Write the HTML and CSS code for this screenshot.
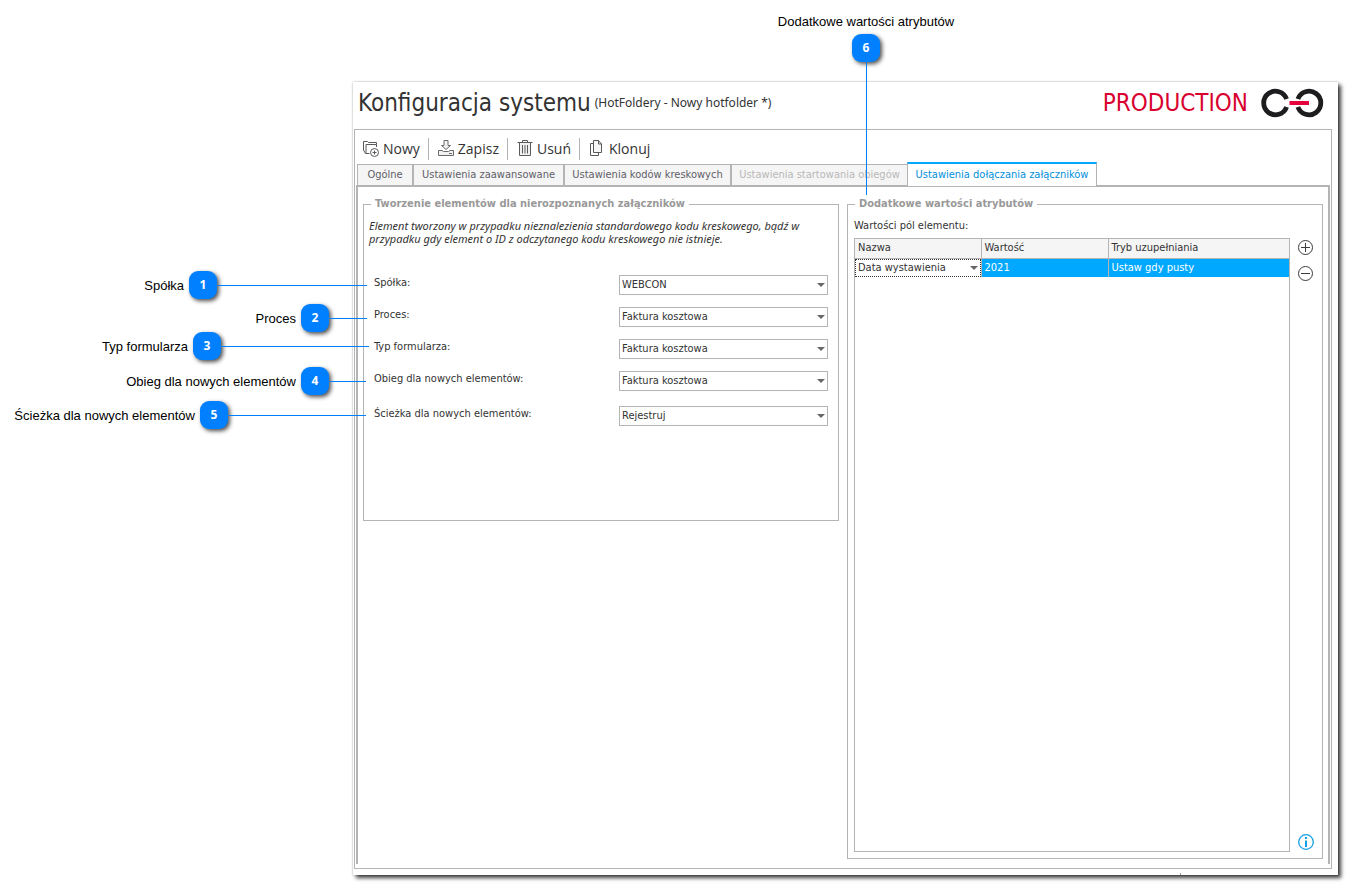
FILE: index.html
```html
<!DOCTYPE html>
<html lang="pl">
<head>
<meta charset="utf-8">
<title>Konfiguracja systemu</title>
<link rel="stylesheet" href="styles.css">
</head>
<body>
<main class="window">
  <header class="header">
    <h1 class="title">Konfiguracja systemu</h1>
    <span class="subtitle">(HotFoldery - Nowy hotfolder *)</span>
    <span class="env">PRODUCTION</span>
    <svg class="logo" width="64" height="30" viewBox="0 0 64 30" fill="none" aria-label="Logo">
      <path d="M25.600 11A11.800 11.800 0 1 0 25.600 19" stroke="#1d1d1f" stroke-width="4.800"/>
      <path d="M36.900 11A11.800 11.800 0 1 1 36.900 19" stroke="#1d1d1f" stroke-width="4.800"/>
      <path d="M28.500 15H48" stroke="#e4003a" stroke-width="4"/>
    </svg>
  </header>

  <div class="frame">
    <div class="toolbar">
      <button class="tool" type="button">
        <svg width="18" height="18" viewBox="0 0 18 18" fill="none" stroke="#5a5a5a">
          <path d="M7.500 13.500H3.500L1.500 10V1.500H5.500L6.500 2.500H14.500V4.500"/><path d="M4 13.500V4.500H14.500V7"/>
          <circle cx="12.500" cy="12.500" r="4"/><path d="M12.500 10.500V14.500M10.500 12.500H14.500"/>
        </svg>Nowy</button>
      <button class="tool" type="button">
        <svg width="18" height="18" viewBox="0 0 18 18" fill="none" stroke="#6a6a6a">
          <path d="M7 0.500H11V5.500H13.500L9 9.500L4.500 5.500H7Z" fill="#f2f2f2"/><path d="M1.500 10.500H5L6.500 11.500H11.500L13 10.500H16.500V15.500H1.500Z" fill="#f2f2f2"/><path d="M12 13.500H15"/>
        </svg>Zapisz</button>
      <button class="tool" type="button">
        <svg width="18" height="18" viewBox="0 0 18 18" fill="none" stroke="#5a5a5a">
          <path d="M6.500 2V0.500H11.500V2M1.500 2.500H16.500"/><path d="M3.500 3V15.500H14.500V3" fill="#f2f2f2"/><path d="M6.500 5V13.500M9 5V13.500M11.500 5V13.500"/>
        </svg>Usuń</button>
      <button class="tool" type="button">
        <svg width="18" height="18" viewBox="0 0 18 18" fill="none" stroke="#5a5a5a">
          <path d="M5.500 0.500H10.500L13.500 4V12.500H5.500Z" fill="#f7f7f7"/><path d="M10.500 0.500V4H13.500M5 3.500H2.500V15.500H10.500V13"/>
        </svg>Klonuj</button>
    </div>

    <nav class="tabs">
      <button class="tab tab-general" type="button">Ogólne</button>
      <button class="tab tab-advanced" type="button">Ustawienia zaawansowane</button>
      <button class="tab tab-barcodes" type="button">Ustawienia kodów kreskowych</button>
      <button class="tab tab-start" type="button" disabled>Ustawienia startowania obiegów</button>
      <button class="tab tab-active" type="button">Ustawienia dołączania załączników</button>
    </nav>

    <section class="page">
      <fieldset class="group group-create">
        <legend>Tworzenie elementów dla nierozpoznanych załączników</legend>
        <p class="hint">Element tworzony w przypadku nieznalezienia standardowego kodu kreskowego, bądź w przypadku gdy element o ID z odczytanego kodu kreskowego nie istnieje.</p>
        <div class="fields">
          <div class="field"><label for="company">Spółka:</label>
            <span class="select"><select id="company"><option>WEBCON</option></select></span></div>
          <div class="field"><label for="process">Proces:</label>
            <span class="select"><select id="process"><option>Faktura kosztowa</option></select></span></div>
          <div class="field"><label for="form">Typ formularza:</label>
            <span class="select"><select id="form"><option>Faktura kosztowa</option></select></span></div>
          <div class="field"><label for="workflow">Obieg dla nowych elementów:</label>
            <span class="select"><select id="workflow"><option>Faktura kosztowa</option></select></span></div>
          <div class="field"><label for="path">Ścieżka dla nowych elementów:</label>
            <span class="select"><select id="path"><option>Rejestruj</option></select></span></div>
        </div>
      </fieldset>

      <fieldset class="group group-values">
        <legend>Dodatkowe wartości atrybutów</legend>
        <p class="caption" id="values-caption">Wartości pól elementu:</p>
        <div class="values">
          <div class="grid">
            <table class="table" aria-labelledby="values-caption">
              <colgroup><col class="col-name"><col class="col-value"><col></colgroup>
              <thead><tr><th>Nazwa</th><th>Wartość</th><th>Tryb uzupełniania</th></tr></thead>
              <tbody><tr>
                <td class="cell-edit"><span class="select"><select aria-label="Nazwa"><option>Data wystawienia</option></select></span></td>
                <td>2021</td><td>Ustaw gdy pusty</td>
              </tr></tbody>
            </table>
          </div>
          <div class="side">
            <button class="round" type="button" aria-label="Dodaj"><svg width="16" height="16" viewBox="0 0 16 16" fill="none" stroke="#3c3c3c"><circle cx="7.500" cy="7.500" r="7"/><path d="M3 7.500H12M7.500 3V12"/></svg></button>
            <button class="round" type="button" aria-label="Usuń wiersz"><svg width="16" height="16" viewBox="0 0 16 16" fill="none" stroke="#3c3c3c"><circle cx="7.500" cy="7.500" r="7"/><path d="M3 7.500H12"/></svg></button>
            <button class="round info" type="button" aria-label="Informacje"><svg width="16" height="16" viewBox="0 0 16 16" fill="none" stroke="#14a0e6"><circle cx="8" cy="8" r="7.300" stroke-width="1.300"/><path d="M8 3V5M8 6.500V13" stroke-width="2"/></svg></button>
          </div>
        </div>
      </fieldset>
    </section>
  </div>
</main>

<div class="callout c1"><span>Spółka</span><b class="badge">1</b><i class="line"></i></div>
<div class="callout c2"><span>Proces</span><b class="badge">2</b><i class="line"></i></div>
<div class="callout c3"><span>Typ formularza</span><b class="badge">3</b><i class="line"></i></div>
<div class="callout c4"><span>Obieg dla nowych elementów</span><b class="badge">4</b><i class="line"></i></div>
<div class="callout c5"><span>Ścieżka dla nowych elementów</span><b class="badge">5</b><i class="line"></i></div>
<div class="callout c6"><span>Dodatkowe wartości atrybutów</span><b class="badge">6</b><i class="line"></i></div>
</body>
</html>
```
FILE: styles.css
```css
* { box-sizing: border-box; }

body {
  margin: 0;
  min-height: 100vh;
  display: flex;
  flex-direction: column;
  position: relative;
  background: #fff;
  color: #333;
  font: 11px/14px Tahoma, "DejaVu Sans Condensed", "DejaVu Sans", sans-serif;
}

button, select { font: inherit; color: inherit; }
button { margin: 0; padding: 0; border: 0; background: none; }

.window {
  flex: 1;
  display: flex;
  flex-direction: column;
  position: relative;
  margin: 82px 10px 10px 353px;
  padding: 0 6px 6px 1px;
  background: #fff;
  box-shadow: 0 0 2px rgba(0, 0, 0, 0.3), 3px 3px 4px rgba(0, 0, 0, 0.75);
}
.window::after {
  content: "";
  position: absolute;
  right: 157px;
  bottom: 0;
  width: 1px;
  height: 2px;
  background: #999;
}

.header { display: flex; align-items: center; height: 47px; padding: 0 7px 6px 4px; }
.title { margin: 0; font-size: 24px; line-height: 30px; font-weight: 400; }
.subtitle { margin-left: 4px; font: 12px/14px Tahoma, "Noto Sans", sans-serif; }
.env { margin-left: auto; font-size: 24px; line-height: 30px; color: #d9002f; }
.logo { margin-left: 13px; }

.frame { flex: 1; display: flex; flex-direction: column; padding: 0 1px 4px; border: 1px solid #b4b4b4; }

.toolbar { display: flex; align-items: center; height: 32px; padding: 6px 0 0 6px; }
.tool {
  display: flex;
  align-items: center;
  gap: 3px;
  height: 22px;
  font: 14px/20px "Segoe UI", "Open Sans", sans-serif;
}
.tool + .tool { margin-left: 8px; padding-left: 8px; border-left: 1px solid #b4b4b4; }

.tabs { display: flex; align-items: flex-end; height: 23px; padding-left: 1px; }
.tab {
  height: 21px;
  border: 1px solid #b4b4b4;
  border-bottom: 0;
  background: #f5f5f5;
  color: #5f5f68;
  white-space: nowrap;
}
.tab:disabled { border-right: 0; color: #b8b8b8; }
.tab-general { width: 56px; }
.tab-advanced { width: 151px; }
.tab-barcodes { width: 167px; }
.tab-start { width: 176px; }
.tab-active {
  width: 190px;
  height: 24px;
  margin-bottom: -1px;
  border-top: 2px solid #00a8ff;
  background: #fff;
  color: #0090dc;
  z-index: 1;
}

.page {
  flex: 1;
  display: grid;
  grid-template-columns: 1fr 1fr;
  gap: 8px;
  padding: 9px 5px 5px;
  border: 2px solid #b4b4b4;
  border-bottom: 0;
}

.group { display: flex; flex-direction: column; min-width: 0; margin: 0; padding: 0; border: 1px solid #b4b4b4; }
.group legend {
  margin-left: 7px;
  padding: 0 4px;
  line-height: 16px;
  font-weight: 700;
  color: #999;
}
.group-create { align-self: start; height: 325px; }

.hint { margin: 0; padding: 7px 5px 0; font: italic 11px/13px Tahoma, "Noto Sans", sans-serif; }
.fields { display: grid; gap: 12px; padding: 30px 10px 0; }
.field { display: grid; grid-template-columns: 1fr 209px; height: 20px; }
.field label { padding-top: 1px; }
.field:last-child { margin-top: 3px; }

.select { position: relative; display: block; }
.select select {
  display: block;
  width: 100%;
  height: 20px;
  padding: 0 2px;
  border: 1px solid #b4b4b4;
  border-radius: 0;
  background: #fff;
  appearance: none;
}
.select::after {
  content: "";
  position: absolute;
  top: 8px;
  right: 3px;
  border: 4px solid transparent;
  border-top-color: #666;
  border-bottom: 0;
  pointer-events: none;
}

.caption { margin: 0; padding: 7px 6px 5px; }
.values { flex: 1; display: flex; padding: 0 8px 6px 6px; }
.grid { flex: 1; border: 1px solid #b4b4b4; }
.table { width: 100%; table-layout: fixed; border-collapse: collapse; }
.col-name { width: 126px; }
.col-value { width: 127px; }
.table th, .table td { padding: 0 3px; text-align: left; font-weight: 400; }
.table th { height: 19px; background: #f5f5f5; border-bottom: 1px solid #b4b4b4; }
.table th + th, .table td + td { border-left: 1px solid #b4b4b4; }
.table td { height: 18px; background: #00a8ff; color: #fff; }
.table .cell-edit { padding: 0; background: #fff; color: #333; }
.select select[aria-label] { height: 18px; border: 1px dotted #333; }
.cell-edit .select::after { top: 7px; }

.side { display: flex; flex-direction: column; gap: 10px; margin-left: 8px; padding-top: 2px; }
.round { width: 16px; height: 16px; }
.round svg { display: block; }
.info { margin-top: auto; margin-bottom: 2px; }

/* Numbered callouts laid over the window */
.callout {
  position: absolute;
  left: 0;
  display: flex;
  align-items: center;
  color: #000;
  font: 13px/16px Arial, "Liberation Sans", sans-serif;
}
.callout span { flex: 1; padding-top: 2px; text-align: right; white-space: nowrap; }
.badge {
  width: 28px;
  height: 28px;
  margin-left: 5px;
  border-radius: 9px;
  background: #0080ff;
  box-shadow: 2px 2px 4px rgba(0, 0, 0, 0.7);
  color: #fff;
  font: 700 12px/28px "Segoe UI", "Open Sans", sans-serif;
  text-align: center;
}
.line { height: 1px; background: #0080ff; }
.c1 { top: 271px; width: 367px; }
.c1 .line { width: 150px; }
.c2 { top: 304px; width: 367px; }
.c2 .line { width: 38px; }
.c3 { top: 332px; width: 369px; }
.c3 .line { width: 148px; }
.c4 { top: 367px; width: 366px; }
.c4 .line { width: 37px; }
.c5 { top: 401px; width: 366px; }
.c5 .line { width: 138px; }
.c6 { top: 12px; left: 766px; width: 200px; flex-direction: column; }
.c6 span { flex: none; }
.c6 .badge { margin: 4px 0 0; }
.c6 .line { width: 1px; height: 133px; }
```
